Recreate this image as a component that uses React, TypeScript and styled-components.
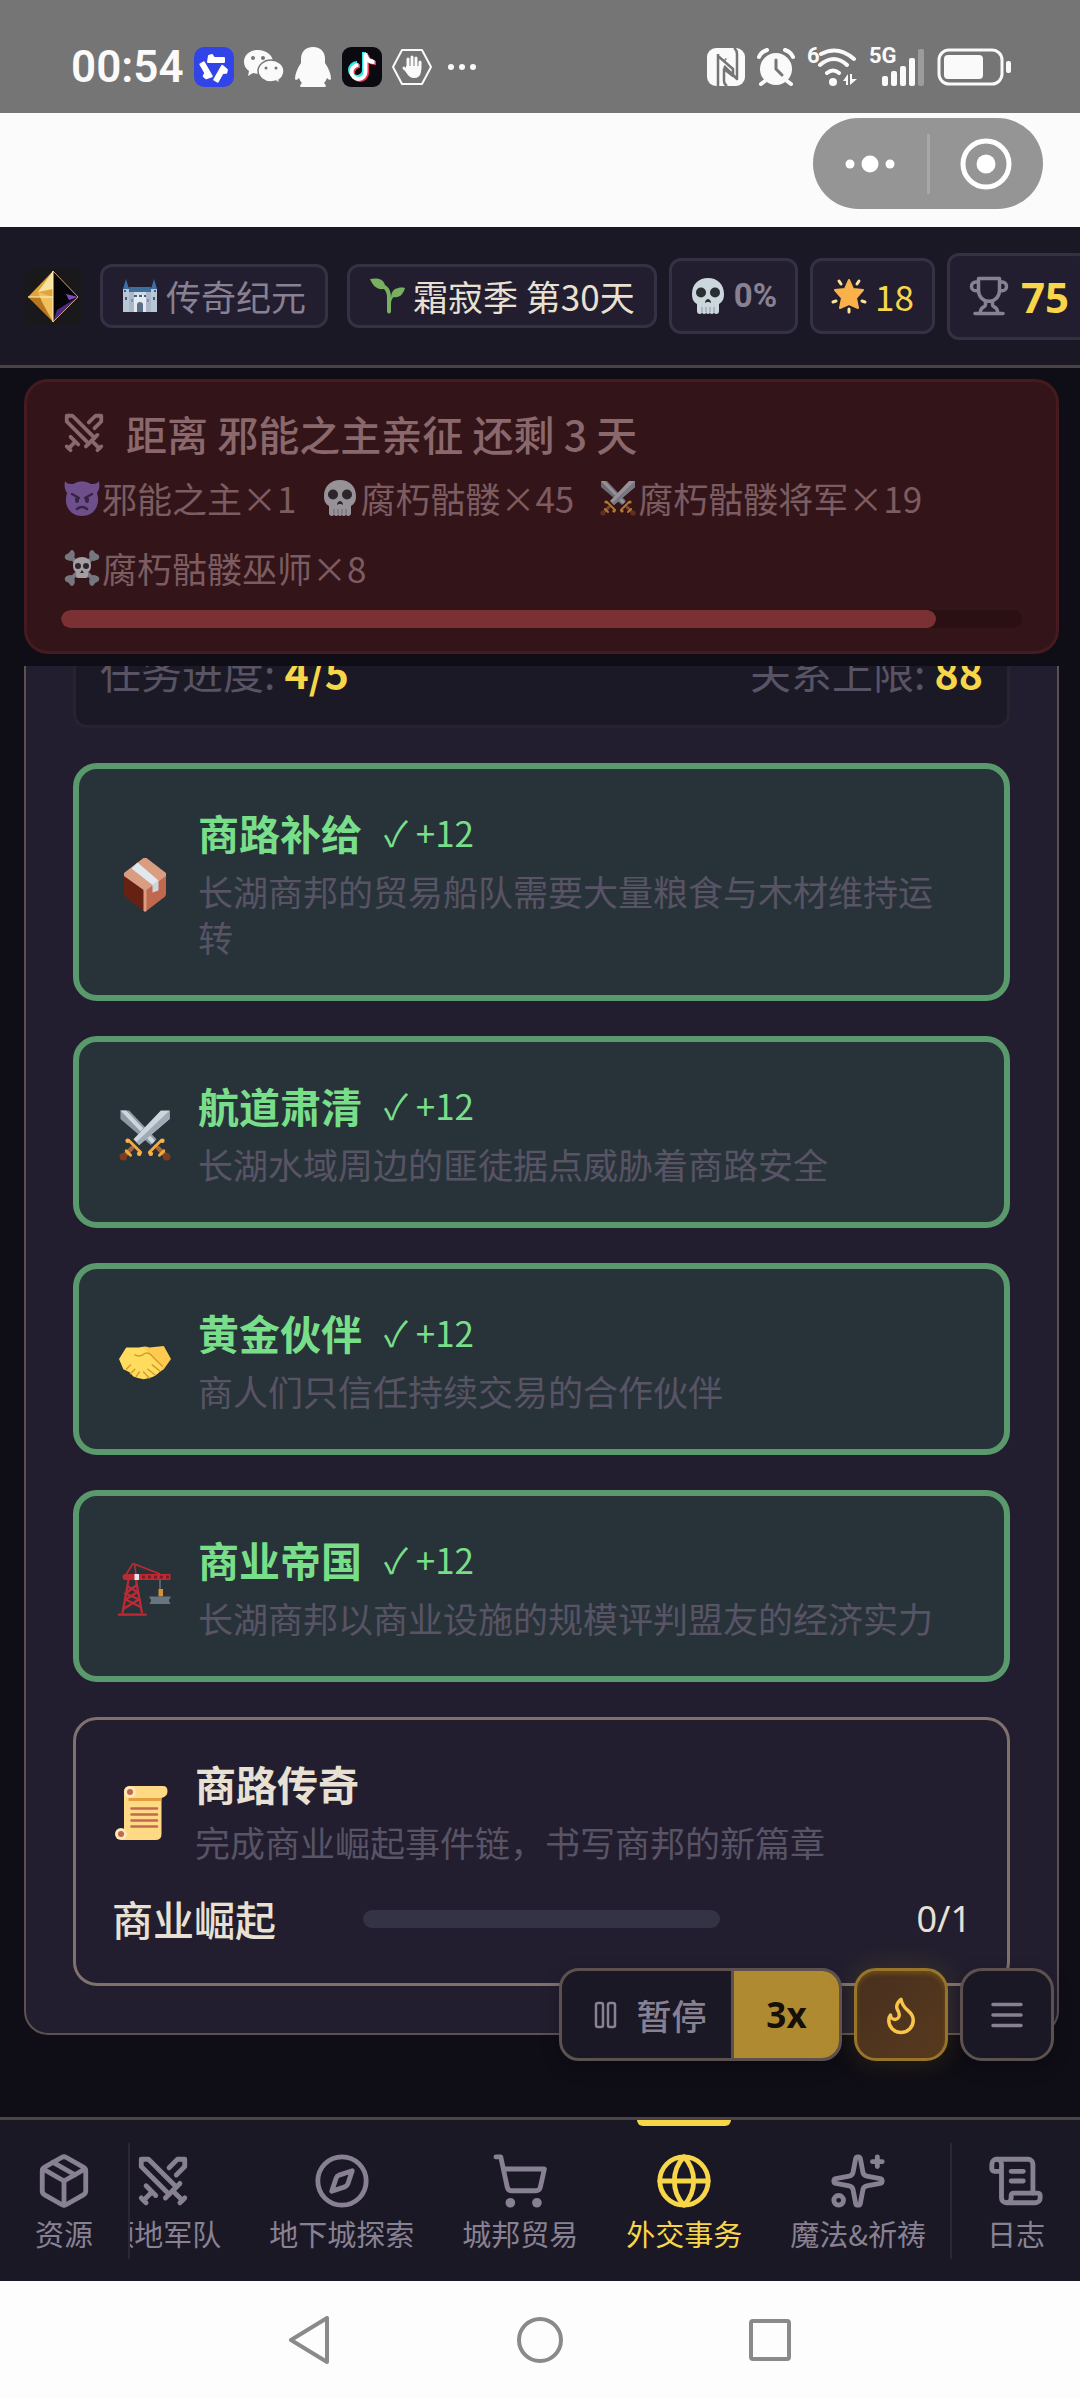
import React from "react";
import styled, { createGlobalStyle, css } from "styled-components";
import { Swords, Package, Compass, ShoppingCart, Globe, Sparkles, ScrollText } from "lucide-react";

const cjk = '"Noto Sans CJK SC", "Noto Sans", sans-serif';
const latin = '"Noto Sans", "Noto Sans CJK SC", sans-serif';

const c = {
  page: "#0f0d16",
  bar: "#1b1825",
  panel: "#221e2f",
  chipLine: "#353144",
  line: "#5d5150",
  muted: "#888193",
  dim: "#585365",
  ivory: "#e8e1d3",
  gold: "#f7d64a",
  green: "#78de8a",
};

const GlobalStyle = createGlobalStyle`
  *, *::before, *::after { box-sizing: border-box; }
  body { margin: 0; background: ${c.page}; font-family: ${cjk}; color: ${c.ivory}; }
  button { font: inherit; color: inherit; border: 0; padding: 0; margin: 0; background: none; cursor: pointer; }
  h2, h3, p, ul { margin: 0; padding: 0; font: inherit; }
  li { list-style: none; }
  svg { display: block; flex-shrink: 0; }
`;

const Screen = styled.div`
  display: flex;
  flex-direction: column;
  height: 100vh;
  overflow: hidden;
`;

/* ---------- system status bar ---------- */

const StatusBar = styled.div`
  display: flex;
  align-items: center;
  justify-content: space-between;
  height: 113px;
  flex-shrink: 0;
  padding: 20px 68px 0 71px;
  background: #757575;
  color: #fafafa;
`;
const StatusGroup = styled.div<{ $gap: number }>`
  display: flex;
  align-items: center;
  gap: ${(p) => p.$gap}px;
`;
const Clock = styled.time`
  font: 600 44px/48px Roboto, sans-serif;
`;

/* ---------- mini program bar ---------- */

const CapsuleBar = styled.div`
  display: flex;
  justify-content: flex-end;
  height: 114px;
  flex-shrink: 0;
  padding: 5px 37px 0 0;
  background: #fbfbfb;
`;
const Capsule = styled.div`
  display: flex;
  align-items: center;
  width: 230px;
  height: 91px;
  border-radius: 46px;
  background: #959595;
`;
const CapsuleButton = styled.button`
  flex: 1;
  display: flex;
  align-items: center;
  justify-content: center;
  height: 60px;
  & + & { border-left: 3px solid #a8a8a8; }
`;

/* ---------- game header ---------- */

const Header = styled.header`
  display: flex;
  align-items: center;
  gap: 12px;
  height: 141px;
  flex-shrink: 0;
  padding-left: 24px;
  overflow: hidden;
  background: ${c.bar};
  border-bottom: 3px solid #4a4244;
  white-space: nowrap;
`;
const HeaderGroup = styled.div`
  display: flex;
  align-items: center;
  gap: 19px;
  flex-shrink: 0;
`;
const Chip = styled.div<{ $tall?: boolean; $color: string }>`
  display: flex;
  align-items: center;
  gap: 8px;
  flex-shrink: 0;
  padding: ${(p) => (p.$tall ? "14px 18px" : "8px 19px")};
  border: 3px solid ${c.chipLine};
  border-radius: 12px;
  background: ${c.panel};
  color: ${(p) => p.$color};
  font-size: 35px;
  line-height: 42px;
`;
const Percent = styled.span`
  font: 700 33px/42px Roboto, sans-serif;
`;
const Score = styled.span`
  padding-left: 3px;
  font: 700 42px/53px ${latin};
  color: ${c.gold};
`;

/* ---------- invasion alert ---------- */

const AlertWrap = styled.div`
  flex-shrink: 0;
  padding: 11px 21px 12px 24px;
`;
const Alert = styled.section`
  padding: 27px 34px 23px;
  border: 3px solid #461a1f;
  border-radius: 24px;
  background: #331519;
  color: #8a686c;
`;
const AlertTitle = styled.h2`
  display: flex;
  align-items: center;
  gap: 19px;
  font-size: 41px;
  font-weight: 500;
  line-height: 48px;
`;
const Foes = styled.ul`
  display: flex;
  flex-wrap: wrap;
  column-gap: 26px;
  padding: 6px 3px 7px;
  font-size: 35px;
  line-height: 70px;
  color: #7c5c61;
`;
const Foe = styled.li`
  display: flex;
  align-items: center;
  gap: 2px;
  svg { opacity: 0.65; }
`;
const Track = styled.div<{ $bg: string }>`
  height: 18px;
  border-radius: 9px;
  overflow: hidden;
  background: ${(p) => p.$bg};
`;
const Fill = styled.div`
  height: 100%;
  border-radius: 9px;
  background: #7b3034;
`;

/* ---------- scroll area ---------- */

const ScrollArea = styled.main`
  position: relative;
  flex: 1;
  min-height: 0;
  display: flex;
  flex-direction: column;
  justify-content: flex-end;
  padding: 0 21px 82px 24px;
  overflow: hidden;
`;
const Panel = styled.section`
  display: flex;
  flex-direction: column;
  gap: 35px;
  flex-shrink: 0;
  padding: 47px;
  border: 2px solid ${c.line};
  border-radius: 24px;
  background: ${c.panel};
`;
const Summary = styled.div`
  display: flex;
  justify-content: space-between;
  padding: 21px 24px 24px;
  border: 3px solid #27232f;
  border-radius: 14px;
  background: #1c1926;
  color: ${c.dim};
  font-size: 41px;
  line-height: 60px;
`;
const Gold = styled.strong`
  font-weight: 700;
  color: ${c.gold};
`;
const Card = styled.article<{ $done?: boolean }>`
  padding: 36px 36px 35px;
  border-radius: 24px;
  ${(p) =>
    p.$done
      ? css`
          border: 6px solid #59996c;
          background: #283339;
        `
      : css`
          border: 3px solid #7f716c;
          background: ${c.panel};
        `}
`;
const CardHead = styled.div`
  display: flex;
  align-items: center;
  gap: 23px;
`;
const IconCell = styled.div`
  display: flex;
  justify-content: center;
  width: 60px;
  padding-top: 4px;
  flex-shrink: 0;
`;
const CardText = styled.div`
  flex: 1;
  display: flex;
  flex-direction: column;
  gap: 9px;
  padding-right: 8px;
`;
const CardTitle = styled.h3<{ $done?: boolean }>`
  display: flex;
  align-items: center;
  gap: 22px;
  font-size: 41px;
  font-weight: 700;
  line-height: 54px;
  color: ${(p) => (p.$done ? c.green : c.ivory)};
`;
const Reward = styled.span`
  font-size: 35px;
  font-weight: 400;
`;
const CardNote = styled.p`
  font-size: 35px;
  line-height: 46px;
  color: ${c.dim};
`;
const Goal = styled.div`
  display: grid;
  grid-template-columns: 7fr 10fr 7fr;
  align-items: center;
  margin-top: 24px;
  font-size: 41px;
  font-weight: 500;
  line-height: 59px;
`;
const Count = styled.span`
  justify-self: end;
  font: 400 36px/59px ${latin};
`;

/* ---------- floating controls ---------- */

const Floating = styled.div`
  position: absolute;
  right: 26px;
  bottom: 56px;
  display: flex;
  gap: 12px;
  height: 93px;
`;
const SpeedGroup = styled.div`
  display: flex;
  width: 283px;
  overflow: hidden;
  border: 3px solid ${c.line};
  border-radius: 20px;
  background: ${c.bar};
  box-shadow: 0 6px 18px rgba(0, 0, 0, 0.25);
`;
const PauseButton = styled.button`
  flex: 1;
  display: flex;
  align-items: center;
  justify-content: center;
  gap: 18px;
  padding-left: 8px;
  border-right: 3px solid ${c.line};
  font-size: 35px;
  font-weight: 500;
  color: ${c.muted};
`;
const SpeedButton = styled.button`
  width: 105px;
  background: #b08a30;
  color: #14100a;
  font: 700 35px/48px ${latin};
`;
const SquareButton = styled.button<{ $hot?: boolean }>`
  display: flex;
  align-items: center;
  justify-content: center;
  width: 94px;
  border: 3px solid ${(p) => (p.$hot ? "#97752a" : c.line)};
  border-radius: 22px;
  background: ${(p) => (p.$hot ? "linear-gradient(135deg, #48301f, #57391d)" : c.bar)};
  color: ${(p) => (p.$hot ? "#f8c548" : c.muted)};
  box-shadow: ${(p) =>
    p.$hot ? "0 0 30px rgba(200, 160, 40, 0.16), inset 0 3px 4px rgba(140, 100, 20, 0.5)" : "0 6px 18px rgba(0, 0, 0, 0.25)"};
`;

/* ---------- tab bar ---------- */

const TabBar = styled.nav`
  display: flex;
  height: 164px;
  flex-shrink: 0;
  border-top: 3px solid #4d4445;
  background: ${c.bar};
`;
const Tab = styled.button<{ $active?: boolean }>`
  position: relative;
  display: flex;
  flex-direction: column;
  align-items: center;
  flex-shrink: 0;
  height: 100%;
  padding: 32px 24px 0;
  font-size: 29px;
  line-height: 46px;
  white-space: nowrap;
  color: ${(p) => (p.$active ? c.gold : c.muted)};
  ${(p) =>
    p.$active &&
    css`
      &::before {
        content: "";
        position: absolute;
        top: 0;
        left: calc(50% - 47px);
        width: 94px;
        height: 6px;
        border-radius: 0 0 6px 6px;
        background: ${c.gold};
      }
    `}
`;
const EdgeTab = styled(Tab)`
  width: 128px;
  padding-left: 0;
  padding-right: 0;
`;
const Rule = styled.div`
  width: 2px;
  margin: 23px 0 22px;
  flex-shrink: 0;
  background: #2a2636;
`;
const TabStrip = styled.div`
  flex: 1;
  min-width: 0;
  display: flex;
  justify-content: flex-end;
  overflow: hidden;
`;

/* ---------- system navigation ---------- */

const SystemNav = styled.div`
  display: flex;
  justify-content: center;
  align-items: center;
  height: 117px;
  flex-shrink: 0;
  background: #fdfdfd;
`;
const SystemButton = styled.button`
  display: flex;
  justify-content: center;
  width: 230px;
`;

/* ---------- drawings ---------- */

type ArtProps = { size?: number };

const Castle = ({ size = 36 }: ArtProps) => (
  <svg width={size} height={size} viewBox="0 0 36 36" aria-hidden="true">
    <path fill="#3c6fa8" d="M4 1 1 11h6zM32 1l-3 10h6z" />
    <path fill="#3f6d9c" d="M7 9h22v6H7z" />
    <path fill="#b9c6d6" d="M1 11h6v23H1zM29 11h6v23h-6z" />
    <path fill="#cfd8e3" d="M7 14h22v20H7z" />
    <path fill="#aab8c9" d="M7 14h5v20H7zM24 14h5v20h-5z" />
    <path fill="#e4eaf1" d="M12 17h12v17H12z" />
    <path fill="#3f5f85" d="M2 12h2v2H2zM32 12h2v2h-2zM12 17h3v2h-3zM17 17h3v2h-3zM22 17h2v2h-2zM3 19h2v3H3zM31 19h2v3h-2z" />
    <path fill="#5c6f87" d="M15 34v-7a3 3 0 0 1 6 0v7z" />
    <path fill="#8192a8" d="M9 21h2v3H9zM25 21h2v3h-2z" />
  </svg>
);

const Sprout = ({ size = 36 }: ArtProps) => (
  <svg width={size} height={size} viewBox="0 0 36 36" aria-hidden="true">
    <path fill="#77b05e" d="M1 1c6-1 13-1 15 6 5 3 6 8 6 13 0-4 1-7 4-9 3-1 6-2 10-1-2 7-6 10-11 9-2 1-3 4-3 7v8q-2 3-4 0V19c0-3-1-6-3-8C8 12 4 8 1 1z" />
  </svg>
);

const Skull = ({ size = 36 }: ArtProps) => (
  <svg width={size} height={size} viewBox="0 0 36 36" aria-hidden="true">
    <path fill="#ccd6dd" d="M34 16C34 6 27 0 18 0S2 6 2 16c0 6 2 8 5 10v7c0 2 1 3 3 3 1 0 2-1 2-2 0 1 1 2 2 2 2 0 2-1 2-2 0 1 1 2 2 2s2-1 2-2c0 1 0 2 2 2 1 0 2-1 2-2 0 1 1 2 2 2 2 0 3-1 3-3v-7c3-2 5-4 5-10z" />
    <circle cx="11" cy="14.500" r="5" fill="#292f33" />
    <circle cx="25" cy="14.500" r="5" fill="#292f33" />
    <path fill="#292f33" d="M15 25c0-3 2-4 3-4s3 1 3 4l-2-1h-2z" />
    <path stroke="#8796a3" d="M12 29v5M16 29v5M20 29v5M24 29v5" />
  </svg>
);

const Star = ({ size = 36 }: ArtProps) => (
  <svg width={size} height={size} viewBox="0 0 36 36" aria-hidden="true">
    <path fill="#f9b24a" strokeLinejoin="round" stroke="#f9b24a" strokeWidth="2" d="m18 2 4 9 10 1-7 8 2 10-9-4-9 4 2-10-7-8 10-1z" />
    <path stroke="#fbe29b" strokeWidth="3" strokeLinecap="round" d="m8 3 2 3M28 3l-2 3M2 24l3-1M34 24l-3-1M18 31v3" />
  </svg>
);

const Imp = ({ size = 36 }: ArtProps) => (
  <svg width={size} height={size} viewBox="0 0 36 36" aria-hidden="true">
    <path fill="#8e6fc8" d="M1 1c2 3 5 3 8 3a17 17 0 0 1 18 0c3 0 6 0 8-3 1 6 0 9-2 12 4 12-3 23-15 23S-1 25 3 13C1 10 0 7 1 1z" />
    <path fill="none" stroke="#3c2a5e" strokeWidth="2.500" strokeLinecap="round" d="m8 14 7 4M28 14l-7 4M13 29q5-4 10 0" />
    <ellipse cx="13" cy="20" rx="2" ry="3" fill="#3c2a5e" />
    <ellipse cx="23" cy="20" rx="2" ry="3" fill="#3c2a5e" />
  </svg>
);

const BattleSwords = ({ size = 36 }: ArtProps) => (
  <svg width={size} height={size} viewBox="0 0 36 36" aria-hidden="true">
    <path fill="#8d9aa6" d="M1 1h6l19 20-4 4L1 7z" />
    <path fill="#ccd6dd" d="m1 1 4 0 20 21-2 2z" />
    <path fill="#3f3030" opacity=".25" d="m13 17 4-4 5 5-4 4z" />
    <path fill="#ccd6dd" d="M35 1h-6L10 21l4 4L35 7z" />
    <path fill="#9eabb6" d="M35 1v6L14 25l-2-2z" />
    <path stroke="#a5643a" strokeWidth="3" strokeLinecap="round" d="m9 27-5 5M27 27l5 5" />
    <path stroke="#f4a93c" strokeWidth="2" strokeLinecap="round" d="m7 22 8 8M29 22l-8 8M5 29l3 3M31 29l-3 3" />
    <g fill="#f9b24a">
      <circle cx="6" cy="22" r="1.600" />
      <circle cx="14" cy="31" r="1.600" />
      <circle cx="30" cy="22" r="1.600" />
      <circle cx="22" cy="31" r="1.600" />
    </g>
    <circle cx="3" cy="33" r="2.600" fill="#7a3d20" />
    <circle cx="33" cy="33" r="2.600" fill="#7a3d20" />
  </svg>
);

const Crossbones = ({ size = 36 }: ArtProps) => (
  <svg width={size} height={size} viewBox="0 0 36 36" aria-hidden="true">
    <path stroke="#99aab5" strokeWidth="4" d="m5 5 26 26M31 5 5 31" />
    <path fill="#99aab5" d="M8 0c2 0 4 4 2 8s-4 3-7 2-3-5 0-6 3-4 5-4zM28 0c-2 0-4 4-2 8s4 3 7 2 3-5 0-6-3-4-5-4zM8 36c2 0 4-4 2-8s-4-3-7-2-3 5 0 6 3 4 5 4zM28 36c-2 0-4-4-2-8s4-3 7-2 3 5 0 6-3 4-5 4z" />
    <path fill="#e1e8ed" d="M27 15c0-5-4-8-9-8s-9 3-9 8c0 4 1 6 3 7v4q0 2 2 2h8q2 0 2-2v-4c2-1 3-3 3-7z" />
    <circle cx="14" cy="16" r="3" fill="#292f33" />
    <circle cx="22" cy="16" r="3" fill="#292f33" />
    <path fill="#292f33" d="m18 20 2 3h-4z" />
  </svg>
);

const Parcel = ({ size = 54 }: ArtProps) => (
  <svg width={size} height={size} viewBox="0 0 36 36" aria-hidden="true">
    <path fill="#662113" d="M4 11v13q0 1 1 2l13 10V18z" />
    <path fill="#c1694f" d="M32 11v13q0 1-1 2L18 36V18z" />
    <path fill="#d99e82" d="M17 0q1-1 2 0l13 10q0 1 0 2L18 22 4 12q0-1 0-2z" />
    <path fill="#d99e82" d="M17 20h2v15l-1 1-1-1z" />
    <path fill="#ccd6dd" d="m23 18 4-3v6q0 1-1 1l-3 1z" />
    <path fill="#e1e8ed" d="m9 7 4-4 14 12-4 3z" />
  </svg>
);

const Handshake = ({ size = 54 }: ArtProps) => (
  <svg width={size} height={size} viewBox="0 0 36 36" aria-hidden="true">
    <path fill="#ffca4d" d="m31 7 5 9-5 7-6 4-11-3L12 9q5-3 9-1z" />
    <path fill="#ffdc5d" d="M5 8 0 16l3 7 4 2 3 3 3 1 4 1 4-1 3-1 3-2 2-3 1-3-9-8-4-4-7 0z" />
    <path fill="none" stroke="#d79a2c" strokeLinecap="round" d="M11 13q4 2 7-1 3-1 5 2l7 7M20 23l5 4M17 25l4 4M23 20l5 4M5 23l3-3M8 26l3-3M12 28l2-3" />
  </svg>
);

const Crane = ({ size = 54 }: ArtProps) => (
  <svg width={size} height={size} viewBox="0 0 36 36" aria-hidden="true">
    <path fill="none" stroke="#be2a34" d="M5 9 10 1M11 1l1 7M10 1l18 7" />
    <path fill="#be2a34" d="M4 8h31v4H4q-2-2 0-4z" />
    <path fill="none" stroke="#be2a34" strokeWidth="1.500" d="M7 12 3 34M12 12l4 22M6 16l7 4-8 5 10 5M13 15l-8 6 9 4-10 6M0 35h19" />
    <path stroke="#7b1b22" strokeDasharray="2 2" strokeWidth="2" d="M16 10h18" />
    <path fill="#e1e8ed" d="M11 8h3v4h-3z" />
    <path stroke="#66757f" d="M28 12v7" />
    <path fill="#d99030" d="M27 18h3v5h-3z" />
    <path fill="#66757f" d="M21 23h14v1l-1 1v1l1 2H21l1-2v-1l-1-1z" />
  </svg>
);

const Scroll = ({ size = 54 }: ArtProps) => (
  <svg width={size} height={size} viewBox="0 0 36 36" aria-hidden="true">
    <path fill="#ffd983" d="M6 4q0-4 4-4h22q3 0 3 3.500T31 8v24q0 4-4 4H4l2-5z" />
    <path fill="#e39f3d" d="M9 8h22v2H9z" />
    <circle cx="10" cy="4" r="4" fill="#ffe8b6" />
    <circle cx="4" cy="32" r="4" fill="#ffe8b6" />
    <circle cx="10" cy="4" r="2" fill="#c1694f" />
    <circle cx="4" cy="32" r="2" fill="#c1694f" />
    <path stroke="#c1694f" strokeWidth="1.700" strokeLinecap="round" d="M11 15h17M11 19h17M11 23h17M11 27h17" />
  </svg>
);

const Gem = () => (
  <svg width="57" height="57" viewBox="0 0 57 57" aria-hidden="true">
    <rect width="57" height="57" rx="8" fill="#19191c" />
    <path fill="#e0a43c" d="M29 3 4 29h25z" />
    <path fill="#f7e3a0" d="M29 3 14 24l15-3z" />
    <path fill="#b8761f" d="m4 29 25 25V29z" />
    <path fill="#f0c060" d="m14 24 15 5v25L18 34z" />
    <path fill="#060508" d="m29 3 25 26-25 25z" />
    <path fill="#4c2b86" d="m54 29-25 25 4-12z" />
    <path fill="#7d4cc0" d="m54 29-12-3 3 6z" />
    <path fill="none" stroke="#c9a27c" d="m29 3 25 26-25 25" />
    <path fill="none" stroke="#fff3c4" d="M29 3v51M4 29h25" />
  </svg>
);

const Stroked = ({ size = 42, width = 2, children }: { size?: number; width?: number; children: React.ReactNode }) => (
  <svg
    width={size}
    height={size}
    viewBox="0 0 24 24"
    fill="none"
    stroke="currentColor"
    strokeWidth={width}
    strokeLinecap="round"
    strokeLinejoin="round"
    aria-hidden="true"
  >
    {children}
  </svg>
);

const TrophyIcon = () => (
  <Stroked>
    <path d="M6 9H4.500a2.500 2.500 0 0 1 0-5H6M18 9h1.500a2.500 2.500 0 0 0 0-5H18M4 22h16M10 14.660V17c0 .55-.47.98-.97 1.210C7.850 18.750 7 20.240 7 22M14 14.660V17c0 .55.47.98.97 1.210C16.150 18.750 17 20.240 17 22M18 2H6v7a6 6 0 0 0 12 0V2Z" />
  </Stroked>
);

const FlameIcon = () => (
  <Stroked>
    <path d="M8.500 14.500A2.500 2.500 0 0 0 11 12c0-1.380-.5-2-1-3-1.072-2.143-.224-4.054 2-6 .5 2.500 2 4.900 4 6.500 2 1.600 3 3.500 3 5.500a7 7 0 1 1-14 0c0-1.153.433-2.294 1-3a2.500 2.500 0 0 0 2.500 2.500z" />
  </Stroked>
);

const MenuIcon = () => (
  <Stroked>
    <path d="M4 6h16M4 12h16M4 18h16" />
  </Stroked>
);

const PauseIcon = () => (
  <svg width="24" height="28" viewBox="0 0 24 28" fill="none" stroke="currentColor" strokeWidth="2.500" aria-hidden="true">
    <rect x="2" y="2" width="7" height="24" rx="2" />
    <rect x="14" y="2" width="7" height="24" rx="2" />
  </svg>
);

const LeftStatusIcons = () => (
  <>
    <svg width="40" height="40" viewBox="0 0 40 40" aria-hidden="true">
      <rect width="40" height="40" rx="10" fill="#3144e8" />
      <g fill="#fff" stroke="#fff" strokeWidth="2" strokeLinejoin="round">
        <path d="m15 9 3-1 2 3h10v4H14z" />
        <path d="m15 9 3-1 2 3h10v4H14z" transform="rotate(120 20 21)" />
        <path d="m15 9 3-1 2 3h10v4H14z" transform="rotate(240 20 21)" />
      </g>
    </svg>
    <svg width="40" height="36" viewBox="0 0 40 36" aria-hidden="true">
      <path fill="#fafafa" d="M14 1C6 1 0 6 0 13c0 4 2 7 5 9l-1 5 5-3 6 1c8 0 14-5 14-12S22 1 14 1z" />
      <path fill="#fafafa" stroke="#757575" strokeWidth="1.500" d="M27 11c-7 0-13 5-13 11s6 11 13 11l5-1 4 3-1-4c3-2 5-5 5-9 0-6-6-11-13-11z" />
      <g fill="#757575">
        <circle cx="9" cy="9" r="2" />
        <circle cx="19" cy="9" r="2" />
        <circle cx="22" cy="19" r="1.500" />
        <circle cx="32" cy="19" r="1.500" />
      </g>
    </svg>
    <svg width="38" height="40" viewBox="0 0 38 40" aria-hidden="true">
      <path fill="#fafafa" d="M19 0c8 0 12 5 12 12v4c4 6 6 11 6 16-1 2-3 0-4-1q-1 3-3 5c2 2 3 4 0 4H8c-3 0-2-2 0-4q-2-2-3-5c-1 1-3 3-4 1 0-5 2-10 6-16v-4C7 5 11 0 19 0z" />
    </svg>
    <svg width="40" height="40" viewBox="0 0 40 40" aria-hidden="true">
      <rect width="40" height="40" rx="9" fill="#0a0a10" />
      <g fill="none" strokeWidth="4">
        <path stroke="#f0385b" d="M25 8v18a7 7 0 1 1-7-7M25 8q1 8 9 8" />
        <path stroke="#35e6e4" d="M22 5v18a7 7 0 1 1-7-7M22 6q1 8 9 8" />
        <path stroke="#fff" d="M23.500 6v19a7 7 0 1 1-7-7M23.500 7q1 8 9 8" />
      </g>
    </svg>
    <svg width="40" height="36" viewBox="0 0 40 36" aria-hidden="true">
      <path fill="none" stroke="#fafafa" strokeWidth="2" strokeLinejoin="round" d="M10 1h20l9 17-9 17H10L1 18z" />
      <path fill="none" stroke="#fafafa" strokeWidth="3" strokeLinecap="round" d="M16 19V10M20 19V8M24 19V9M28 20v-7M16 23l-4-4" />
      <path fill="#fafafa" d="M14 17h15v6q-1 6-7 6-5 0-8-6z" />
    </svg>
    <svg width="40" height="10" viewBox="0 0 40 10" aria-hidden="true">
      <g fill="#fafafa">
        <circle cx="9" cy="5" r="3" />
        <circle cx="20" cy="5" r="3" />
        <circle cx="31" cy="5" r="3" />
      </g>
    </svg>
  </>
);

const NetLabel = styled.span`
  position: absolute;
  left: 0;
  top: -4px;
  font: 700 22px/24px Roboto, sans-serif;
`;
const NetBox = styled.span`
  position: relative;
  display: flex;
`;

const RightStatusIcons = () => (
  <>
    <svg width="38" height="38" viewBox="0 0 38 38" aria-hidden="true">
      <rect width="38" height="38" rx="9" fill="#fafafa" />
      <path fill="none" stroke="#757575" strokeWidth="2.500" strokeLinejoin="round" d="M11 38V8l15 13v7l-9-7v12q0 3 3 5M11 30V6M19 12l-1-1M27 0q3 2 3 6v25L17 18" />
    </svg>
    <svg width="38" height="38" viewBox="0 0 38 38" aria-hidden="true">
      <circle cx="19" cy="21" r="16" fill="#fafafa" />
      <path stroke="#fafafa" strokeWidth="4" strokeLinecap="round" fill="none" d="m8 33-4 3M30 33l4 3M2 9q2-5 8-7M36 9q-2-5-8-7" />
      <path stroke="#757575" strokeWidth="3" strokeLinecap="round" strokeLinejoin="round" fill="none" d="M19 12v9l6 6" />
    </svg>
    <NetBox>
      <NetLabel>6</NetLabel>
      <svg width="50" height="38" viewBox="0 0 50 38" aria-hidden="true">
        <g fill="none" stroke="#fafafa" strokeWidth="4" strokeLinecap="round">
          <path d="M14 6q17-9 33 5M13 17q14-12 27 0M20 25q6-5 12 0" />
        </g>
        <circle cx="26" cy="34" r="4" fill="#fafafa" />
        <path fill="#fafafa" d="M36 33l5-7v11h-2v-4zM43 26h2v5h5l-7 6z" />
      </svg>
    </NetBox>
    <NetBox>
      <NetLabel>5G</NetLabel>
      <svg width="56" height="38" viewBox="0 0 56 38" aria-hidden="true">
        <g fill="#fafafa">
          <rect x="13" y="28" width="6" height="10" rx="2" />
          <rect x="22" y="23" width="6" height="15" rx="2" />
          <rect x="31" y="18" width="6" height="20" rx="2" />
          <rect x="40" y="10" width="6" height="28" rx="2" />
          <rect x="49" y="1" width="6" height="37" rx="2" opacity=".3" />
        </g>
      </svg>
    </NetBox>
    <svg width="75" height="38" viewBox="0 0 75 38" aria-hidden="true">
      <rect x="2" y="2" width="63" height="34" rx="10" fill="none" stroke="#fafafa" strokeWidth="3" />
      <rect x="7" y="7" width="39" height="24" rx="4" fill="#fafafa" />
      <rect x="69" y="13" width="5" height="12" rx="2" fill="#fafafa" />
    </svg>
  </>
);

/* ---------- data ---------- */

const foes = [
  { icon: <Imp />, name: "邪能之主", count: 1 },
  { icon: <Skull />, name: "腐朽骷髅", count: 45 },
  { icon: <BattleSwords />, name: "腐朽骷髅将军", count: 19 },
  { icon: <Crossbones />, name: "腐朽骷髅巫师", count: 8 },
];

const finished = [
  { icon: <Parcel />, title: "商路补给", note: "长湖商邦的贸易船队需要大量粮食与木材维持运转" },
  { icon: <BattleSwords size={52} />, title: "航道肃清", note: "长湖水域周边的匪徒据点威胁着商路安全" },
  { icon: <Handshake size={52} />, title: "黄金伙伴", note: "商人们只信任持续交易的合作伙伴" },
  { icon: <Crane />, title: "商业帝国", note: "长湖商邦以商业设施的规模评判盟友的经济实力" },
];

const tabs = [
  { Icon: Swords, label: "领地军队" },
  { Icon: Compass, label: "地下城探索" },
  { Icon: ShoppingCart, label: "城邦贸易" },
  { Icon: Globe, label: "外交事务", active: true },
  { Icon: Sparkles, label: "魔法&祈祷" },
];

export default function App() {
  const warning = 91;
  return (
    <Screen>
      <GlobalStyle />
      <StatusBar>
        <StatusGroup $gap={10}>
          <Clock>00:54</Clock>
          <LeftStatusIcons />
        </StatusGroup>
        <StatusGroup $gap={12}>
          <RightStatusIcons />
        </StatusGroup>
      </StatusBar>

      <CapsuleBar>
        <Capsule>
          <CapsuleButton aria-label="更多">
            <svg width="50" height="20" viewBox="0 0 50 20" fill="#fff" aria-hidden="true">
              <circle cx="5" cy="10" r="4.500" />
              <circle cx="25" cy="10" r="8.500" />
              <circle cx="45" cy="10" r="4.500" />
            </svg>
          </CapsuleButton>
          <CapsuleButton aria-label="关闭">
            <svg width="52" height="52" viewBox="0 0 52 52" aria-hidden="true">
              <circle cx="26" cy="26" r="23" fill="none" stroke="#fff" strokeWidth="5" />
              <circle cx="26" cy="26" r="9.500" fill="#fff" />
            </svg>
          </CapsuleButton>
        </Capsule>
      </CapsuleBar>

      <Header>
        <HeaderGroup>
          <Gem />
          <Chip $color={c.muted}>
            <Castle />
            <span>传奇纪元</span>
          </Chip>
          <Chip $color={c.ivory}>
            <Sprout />
            <span>霜寂季 第30天</span>
          </Chip>
        </HeaderGroup>
        <Chip $tall $color={c.muted}>
          <Skull />
          <Percent>0%</Percent>
        </Chip>
        <Chip $tall $color={c.gold}>
          <Star />
          <span>18</span>
        </Chip>
        <Chip $tall $color={c.muted}>
          <TrophyIcon />
          <Score>75</Score>
        </Chip>
      </Header>

      <AlertWrap>
        <Alert>
          <AlertTitle>
            <Swords size={46} />
            <span>距离 邪能之主亲征 还剩 3 天</span>
          </AlertTitle>
          <Foes>
            {foes.map((f) => (
              <Foe key={f.name}>
                {f.icon}
                <span>{`${f.name}×${f.count}`}</span>
              </Foe>
            ))}
          </Foes>
          <Track $bg="#2b1013" role="progressbar" aria-valuenow={warning} aria-valuemin={0} aria-valuemax={100}>
            <Fill style={{ width: `${warning}%` }} />
          </Track>
        </Alert>
      </AlertWrap>

      <ScrollArea>
        <Panel>
          <Summary>
            <span>
              任务进度: <Gold>4/5</Gold>
            </span>
            <span>
              关系上限: <Gold>88</Gold>
            </span>
          </Summary>
          {finished.map((q) => (
            <Card key={q.title} $done>
              <CardHead>
                <IconCell>{q.icon}</IconCell>
                <CardText>
                  <CardTitle $done>
                    {q.title}
                    <Reward>✓ +12</Reward>
                  </CardTitle>
                  <CardNote>{q.note}</CardNote>
                </CardText>
              </CardHead>
            </Card>
          ))}
          <Card>
            <CardHead>
              <IconCell>
                <Scroll />
              </IconCell>
              <CardText>
                <CardTitle>商路传奇</CardTitle>
                <CardNote>完成商业崛起事件链，书写商邦的新篇章</CardNote>
              </CardText>
            </CardHead>
            <Goal>
              <span>商业崛起</span>
              <Track $bg="#343245" role="progressbar" aria-valuenow={0} aria-valuemin={0} aria-valuemax={1} />
              <Count>0/1</Count>
            </Goal>
          </Card>
        </Panel>
        <Floating>
          <SpeedGroup>
            <PauseButton>
              <PauseIcon />
              暂停
            </PauseButton>
            <SpeedButton>3x</SpeedButton>
          </SpeedGroup>
          <SquareButton $hot aria-label="加速">
            <FlameIcon />
          </SquareButton>
          <SquareButton aria-label="菜单">
            <MenuIcon />
          </SquareButton>
        </Floating>
      </ScrollArea>

      <TabBar>
        <EdgeTab>
          <Package size={58} />
          资源
        </EdgeTab>
        <Rule />
        <TabStrip>
          {tabs.map(({ Icon, label, active }) => (
            <Tab key={label} $active={active}>
              <Icon size={58} />
              {label}
            </Tab>
          ))}
        </TabStrip>
        <Rule />
        <EdgeTab>
          <ScrollText size={58} />
          日志
        </EdgeTab>
      </TabBar>

      <SystemNav>
        <SystemButton aria-label="返回">
          <svg width="46" height="48" viewBox="0 0 46 48" fill="none" stroke="#8a8a8a" strokeWidth="4" strokeLinejoin="round" aria-hidden="true">
            <path d="M40 2v44L4 24z" />
          </svg>
        </SystemButton>
        <SystemButton aria-label="主页">
          <svg width="48" height="48" viewBox="0 0 48 48" fill="none" stroke="#8a8a8a" strokeWidth="4" aria-hidden="true">
            <circle cx="24" cy="24" r="21" />
          </svg>
        </SystemButton>
        <SystemButton aria-label="最近任务">
          <svg width="42" height="42" viewBox="0 0 42 42" fill="none" stroke="#8a8a8a" strokeWidth="4" aria-hidden="true">
            <rect x="2" y="2" width="38" height="38" rx="2" />
          </svg>
        </SystemButton>
      </SystemNav>
    </Screen>
  );
}
